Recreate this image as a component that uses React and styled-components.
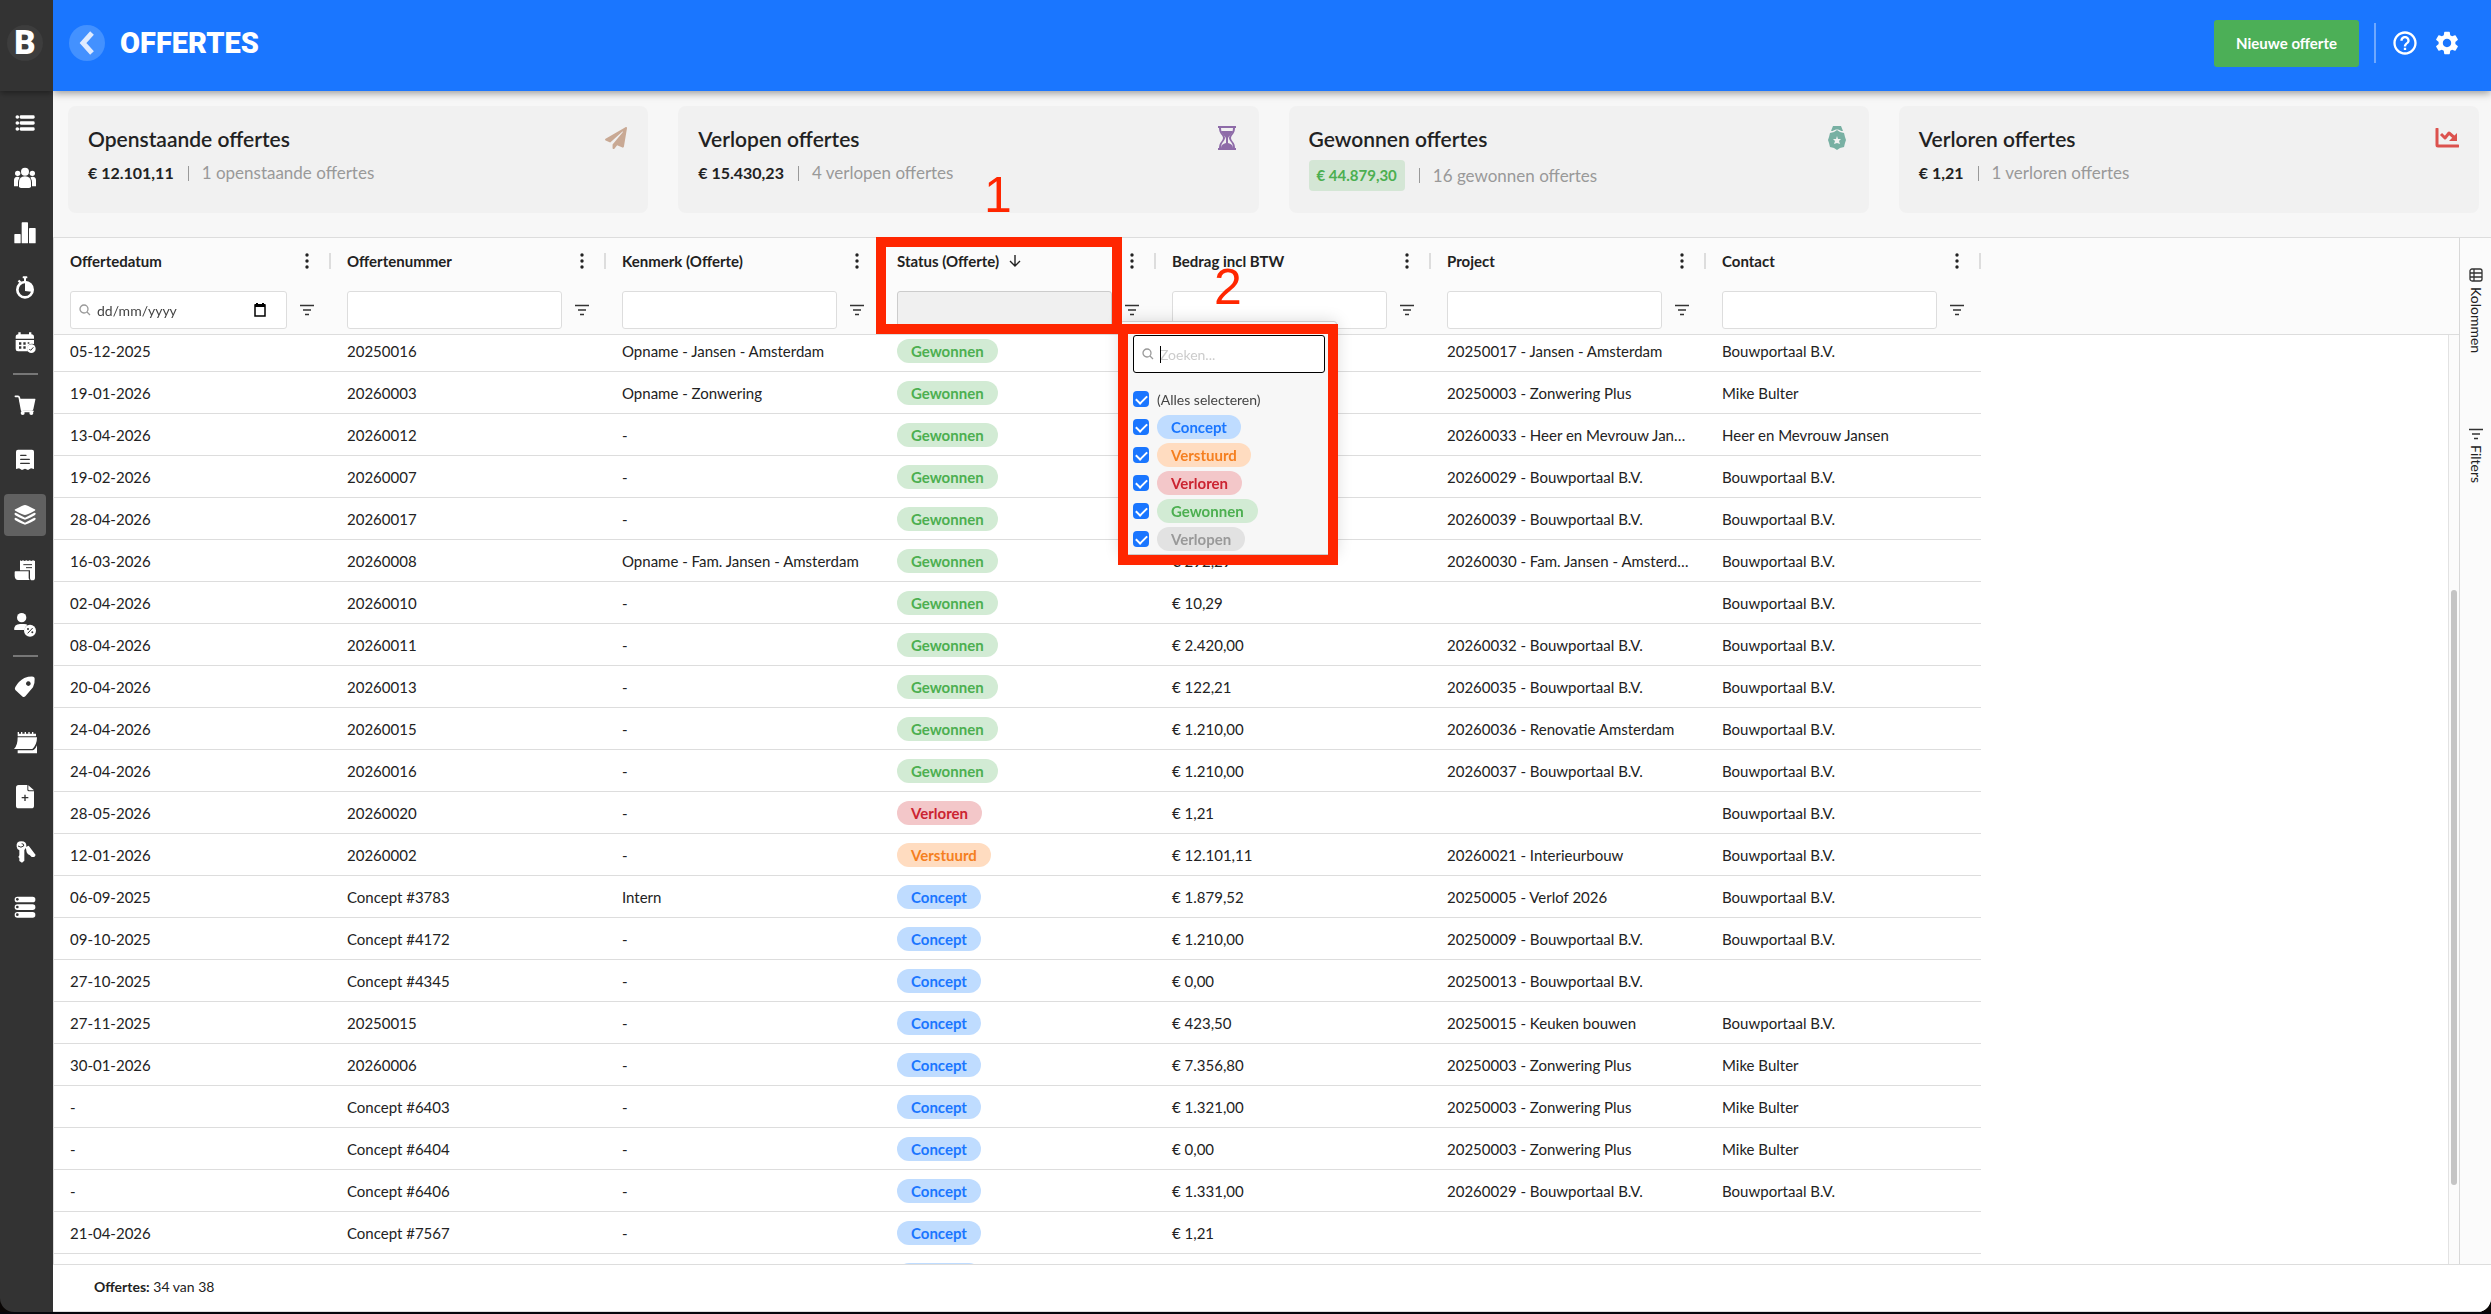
import React from "react";
import styled, { createGlobalStyle, css } from "styled-components";
import { MdHelpOutline, MdSettings } from "react-icons/md";
import { FaPaperPlane } from "react-icons/fa";

const GlobalStyle = createGlobalStyle`
  * {
    box-sizing: border-box;
  }

  body {
    margin: 0;
    background: #0a0706;
    color: #222;
    font-family: Lato, "Open Sans", sans-serif;
    font-size: 14px;
  }

  button,
  input {
    font: inherit;
    color: inherit;
  }
`;

const statusColors = {
  Concept: { text: "#1a76ff", background: "#bfdcff" },
  Verstuurd: { text: "#f57f20", background: "#ffdcc0" },
  Verloren: { text: "#cb2431", background: "#f3c7c9" },
  Gewonnen: { text: "#4caf50", background: "#d2ebd4" },
  Verlopen: { text: "#999999", background: "#e2e2e2" },
};

const columns = [
  "Offertedatum",
  "Offertenummer",
  "Kenmerk (Offerte)",
  "Status (Offerte)",
  "Bedrag incl BTW",
  "Project",
  "Contact",
];

const rows = [
  ["05-12-2025", "20250016", "Opname - Jansen - Amsterdam", "Gewonnen", "", "20250017 - Jansen - Amsterdam", "Bouwportaal B.V."],
  ["19-01-2026", "20260003", "Opname - Zonwering", "Gewonnen", "", "20250003 - Zonwering Plus", "Mike Bulter"],
  ["13-04-2026", "20260012", "-", "Gewonnen", "", "20260033 - Heer en Mevrouw Jansen", "Heer en Mevrouw Jansen"],
  ["19-02-2026", "20260007", "-", "Gewonnen", "", "20260029 - Bouwportaal B.V.", "Bouwportaal B.V."],
  ["28-04-2026", "20260017", "-", "Gewonnen", "", "20260039 - Bouwportaal B.V.", "Bouwportaal B.V."],
  ["16-03-2026", "20260008", "Opname - Fam. Jansen - Amsterdam", "Gewonnen", "€ 292,29", "20260030 - Fam. Jansen - Amsterdam", "Bouwportaal B.V."],
  ["02-04-2026", "20260010", "-", "Gewonnen", "€ 10,29", "", "Bouwportaal B.V."],
  ["08-04-2026", "20260011", "-", "Gewonnen", "€ 2.420,00", "20260032 - Bouwportaal B.V.", "Bouwportaal B.V."],
  ["20-04-2026", "20260013", "-", "Gewonnen", "€ 122,21", "20260035 - Bouwportaal B.V.", "Bouwportaal B.V."],
  ["24-04-2026", "20260015", "-", "Gewonnen", "€ 1.210,00", "20260036 - Renovatie Amsterdam", "Bouwportaal B.V."],
  ["24-04-2026", "20260016", "-", "Gewonnen", "€ 1.210,00", "20260037 - Bouwportaal B.V.", "Bouwportaal B.V."],
  ["28-05-2026", "20260020", "-", "Verloren", "€ 1,21", "", "Bouwportaal B.V."],
  ["12-01-2026", "20260002", "-", "Verstuurd", "€ 12.101,11", "20260021 - Interieurbouw", "Bouwportaal B.V."],
  ["06-09-2025", "Concept #3783", "Intern", "Concept", "€ 1.879,52", "20250005 - Verlof 2026", "Bouwportaal B.V."],
  ["09-10-2025", "Concept #4172", "-", "Concept", "€ 1.210,00", "20250009 - Bouwportaal B.V.", "Bouwportaal B.V."],
  ["27-10-2025", "Concept #4345", "-", "Concept", "€ 0,00", "20250013 - Bouwportaal B.V.", ""],
  ["27-11-2025", "20250015", "-", "Concept", "€ 423,50", "20250015 - Keuken bouwen", "Bouwportaal B.V."],
  ["30-01-2026", "20260006", "-", "Concept", "€ 7.356,80", "20250003 - Zonwering Plus", "Mike Bulter"],
  ["-", "Concept #6403", "-", "Concept", "€ 1.321,00", "20250003 - Zonwering Plus", "Mike Bulter"],
  ["-", "Concept #6404", "-", "Concept", "€ 0,00", "20250003 - Zonwering Plus", "Mike Bulter"],
  ["-", "Concept #6406", "-", "Concept", "€ 1.331,00", "20260029 - Bouwportaal B.V.", "Bouwportaal B.V."],
  ["21-04-2026", "Concept #7567", "-", "Concept", "€ 1,21", "", ""],
  ["", "", "", "Concept", "", "", ""],
];

/* Icons */

const NavIcon = ({ children }) => (
  <svg width="22" height="22" viewBox="0 0 66 66" fill="#fff" aria-hidden="true">
    {children}
  </svg>
);

const ListIcon = () => (
  <NavIcon>
    {[10, 28, 46].map((y) => (
      <g key={y}>
        <circle cx="10" cy={y + 5} r="5.5" />
        <rect x="17" y={y} width="45" height="10" rx="4" />
      </g>
    ))}
  </NavIcon>
);

const PeopleIcon = () => (
  <NavIcon>
    <circle cx="11" cy="19" r="8" />
    <circle cx="55" cy="19" r="8" />
    <circle cx="33" cy="14" r="12" />
    <path d="M0 58V40Q0 29 10 29Q15 29 17 32Q12 38 12 46V58Z" />
    <path d="M66 58V40Q66 29 56 29Q51 29 49 32Q54 38 54 46V58Z" />
    <path d="M15 58V46Q15 28 33 28Q51 28 51 46V58Q51 63 45 63H21Q15 63 15 58Z" />
  </NavIcon>
);

const BarsIcon = () => (
  <NavIcon>
    <rect x="1" y="36" width="19" height="28" rx="2" />
    <rect x="23" y="1" width="19" height="63" rx="2" />
    <rect x="45" y="18" width="20" height="46" rx="2" />
  </NavIcon>
);

const StopwatchIcon = () => (
  <NavIcon>
    <rect x="26" y="-2" width="14" height="6" rx="2" />
    <rect x="30" y="2" width="6" height="10" />
    <path d="M11 13l5-5 6 6-5 5z" />
    <circle cx="33" cy="38" r="23" fill="none" stroke="#fff" strokeWidth="8" />
    <path d="M33 14A24 24 0 0 1 57 38L52 44L33 42Z" />
  </NavIcon>
);

const CalendarIcon = () => (
  <NavIcon>
    <path d="M13 1h7v6h25V1h7v6q8 0 8 8v5H5v-5q0-8 8-8z" />
    <path d="M5 24h55v12q-18-4-20 14q0 4 2 8H12q-7 0-7-7z" />
    <path d="M15 31h7v7h-7zM28 31h7v7h-7zM41 31h5v4h-5zM15 43h7v7h-7zM28 43h7v7h-7z" fill="#333" />
    <circle cx="52" cy="50" r="13" />
    <path d="M46 51l4 4 8-9" fill="none" stroke="#333" strokeWidth="3" />
  </NavIcon>
);

const CartIcon = () => (
  <NavIcon>
    <path d="M4 7h8q3 0 4 4l7 37q1 4 5 4h29" fill="none" stroke="#fff" strokeWidth="5" strokeLinecap="round" />
    <path d="M15 14h48q2 0 1 3l-6 29q-1 4-5 4H24z" />
    <circle cx="26" cy="57" r="6" />
    <circle cx="52" cy="57" r="6" />
  </NavIcon>
);

const ReceiptIcon = () => (
  <NavIcon>
    <path d="M6 8q0-6 6-6h42q6 0 6 6v52l-9-2-9 5-9-4-9 4-9-5-9 2z" />
    <path d="M20 19h16M20 31h26M20 43h26" stroke="#333" strokeWidth="4" strokeLinecap="round" />
  </NavIcon>
);

const LayersIcon = () => (
  <NavIcon>
    <path d="M33 3Q38 3 62 16Q66 18 62 20Q38 33 33 33Q28 33 4 20Q0 18 4 16Q28 3 33 3Z" />
    <path d="M2 28Q4 25 8 28L33 41L58 28Q62 25 65 28Q66 31 62 34Q38 47 33 47Q28 47 4 34Q0 31 2 28Z" />
    <path d="M2 43Q4 40 8 43L33 56L58 43Q62 40 65 43Q66 46 62 49Q38 62 33 62Q28 62 4 49Q0 46 2 43Z" />
  </NavIcon>
);

const InvoiceIcon = () => (
  <NavIcon>
    <path d="M18 4l4 2 5-2 5 2 5-2 5 2 5-2 5 2 5-2 6 2v50q0 8-8 8-7 0-7-8V34H18z" />
    <path d="M28 17h26M36 26h18" stroke="#333" strokeWidth="3" />
    <path d="M4 37h40v19q0 4 3 7H12q-9 0-10-12V40q0-3 2-3z" />
  </NavIcon>
);

const UserDiscountIcon = () => (
  <NavIcon>
    <circle cx="23" cy="11" r="14" />
    <path d="M0 48q0-18 18-18h12q8 0 10 3-9 6-9 15H4q-4 0-4-3z" />
    <circle cx="48" cy="50" r="18" />
    <path d="M41 58L56 42" stroke="#333" strokeWidth="3" />
    <circle cx="42" cy="45" r="3" fill="#333" />
    <circle cx="55" cy="55" r="3" fill="#333" />
  </NavIcon>
);

const TagIcon = () => (
  <NavIcon>
    <path
      fillRule="evenodd"
      d="M31 6Q45 1 58 2Q62 3 62 8Q63 20 57 34L34 61Q30 65 26 62L4 42Q1 38 4 33Q14 15 31 6ZM43 16a7 7 0 1 0 .1 0z"
    />
  </NavIcon>
);

const NotepadIcon = () => (
  <NavIcon>
    <path d="M11 3h4v5h6V3h4v5h7V3h4v5h7V3h4v5h7V3h4v5h8v8H11z" />
    <path d="M11 19h58q0 22-14 35H0q11-10 11-35z" />
    <path d="M60 56q6-5 9-13v24H11V58h45z" />
  </NavIcon>
);

const FilePlusIcon = () => (
  <NavIcon>
    <path d="M6 5q0-8 8-8h26v14q0 5 5 5h15v43q0 8-8 8H14q-8 0-8-8z" />
    <path d="M43-2l17 15H46q-3 0-3-3z" />
    <path d="M33 26v19M23 35h20" stroke="#333" strokeWidth="4" />
  </NavIcon>
);

const KeysIcon = () => (
  <NavIcon>
    <path d="M35 18L44 14L65 42L61 48L53 48L47 42L42 40L38 34Z" />
    <path
      d="M8 17Q6 1 22 1Q38 1 37 15Q37 22 31 27V59L24 65L16 60V52L13 48L16 43V28Q9 25 8 17Z"
    />
    <path d="M12 15Q21 22 29 15Q31 8 23 8" fill="none" stroke="#333" strokeWidth="3" />
  </NavIcon>
);

const ServerIcon = () => (
  <NavIcon>
    {[2, 25, 48].map((y) => (
      <g key={y}>
        <rect x="2" y={y} width="62" height="17" rx="8" />
        <circle cx="10" cy={y + 8} r="4" fill="#333" />
      </g>
    ))}
  </NavIcon>
);

const HourglassIcon = () => (
  <svg width="18" height="24" viewBox="0 0 18 24" fill="#8e6ba8" aria-hidden="true">
    <path d="M0 0h18v2H0zM0 22h18v2H0z" />
    <path d="M1 2h2c0 6 4 7 4 10s-4 4-4 10H1c0-6 4-7 4-10S1 8 1 2zM17 2h-2c0 6-4 7-4 10s4 4 4 10h2c0-6-4-7-4-10s4-4 4-10z" />
    <path d="M3 5h12c-1 4-5 5-5 8v4c3 1 5 2 5 5H3c0-3 2-4 5-5v-4C8 10 4 9 3 5z" />
  </svg>
);

const MedalIcon = () => (
  <svg width="18" height="24" viewBox="0 0 18 24" fill="#78b0a3" aria-hidden="true">
    <path d="M5 0h8l2 5H13c-2-2-6-2-8 0H3z" />
    <path d="M9 4l3 2 4 1 1 4 1 3-1 3-1 4-4 1-3 2-3-2-4-1-1-4-1-3 1-3 1-4 4-1z" />
    <path d="M9 10l1 3h3l-2 2 1 3-3-1-3 1 1-3-2-2h3z" fill="#f1f1f1" />
  </svg>
);

const DeclineIcon = () => (
  <svg width="24" height="20" viewBox="0 0 24 20" fill="none" stroke="#dc524e" aria-hidden="true">
    <path d="M2 1v16q0 1 1 1h20" strokeWidth="3" strokeLinecap="round" />
    <path d="M6 6l4 4 4-5 7 6" strokeWidth="3" strokeLinejoin="round" />
    <path d="M22 5v8h-8z" fill="#dc524e" stroke="none" />
  </svg>
);

const KebabIcon = () => (
  <svg width="4" height="16" viewBox="0 0 4 16" fill="#222" aria-hidden="true">
    <circle cx="2" cy="2" r="1.7" />
    <circle cx="2" cy="8" r="1.7" />
    <circle cx="2" cy="14" r="1.7" />
  </svg>
);

const FilterIcon = () => (
  <svg width="14" height="12" viewBox="0 0 14 12" stroke="#333" strokeWidth="1.5" aria-hidden="true">
    <path d="M0 1.5h14M3 6h8M5 10.5h4" />
  </svg>
);

const SearchIcon = () => (
  <svg width="12" height="12" viewBox="0 0 12 12" fill="none" stroke="#999" strokeWidth="1.3" aria-hidden="true">
    <circle cx="5" cy="5" r="4" />
    <path d="M8 8l3 3" />
  </svg>
);

const DateIcon = () => (
  <svg width="12" height="14" viewBox="0 0 12 14" aria-hidden="true">
    <path d="M1 2h10v11H1z" fill="none" stroke="#000" strokeWidth="1.5" />
    <path d="M1 1h10v3H1zM2 0h2v2H2zM8 0h2v2H8z" />
  </svg>
);

const GridIcon = () => (
  <svg width="14" height="14" viewBox="0 0 14 14" fill="none" stroke="#333" strokeWidth="1.3" aria-hidden="true">
    <rect x="1" y="1" width="12" height="12" rx="2" />
    <path d="M1 5h12M5 1v12M1 9h12" />
  </svg>
);

const ArrowDownIcon = () => (
  <svg width="12" height="12" viewBox="0 0 12 12" fill="none" stroke="#222" strokeWidth="1.4" aria-hidden="true">
    <path d="M6 0v11M1 6l5 5 5-5" />
  </svg>
);

/* Shell */

const Screen = styled.div`
  position: relative;
  display: flex;
  height: 100vh;
  border-bottom: 2px solid #05060c;
  overflow: hidden;
`;

const Sidebar = styled.nav`
  flex: none;
  width: 53px;
  background: #333;
  border-bottom-left-radius: 14px;
`;

const Logo = styled.div`
  height: 91px;
  padding: 25px 0 0 7px;
  box-shadow: 0 2px 6px rgba(0, 0, 0, 0.4);
`;

const LogoMark = styled.div`
  width: 36px;
  height: 36px;
  border-radius: 50%;
  background: #3d3d3d;
  color: #fff;
  font-family: Roboto, sans-serif;
  font-size: 33px;
  font-weight: 900;
  line-height: 36px;
  text-align: center;
`;

const NavList = styled.div`
  display: flex;
  flex-direction: column;
  padding: 5px 0 0 4px;
`;

const NavLink = styled.a`
  display: flex;
  align-items: center;
  justify-content: center;
  width: 42px;
  height: 42px;
  margin: 6px 0 7px;
  border-radius: 4px;
  background: ${(props) => (props.$active ? "#616161" : "transparent")};

  svg {
    overflow: visible;
  }
`;

const NavDivider = styled.div`
  width: 25px;
  height: 2px;
  margin: 2px 0 3px 9px;
  background: #777;
`;

const Main = styled.main`
  flex: 1;
  display: flex;
  flex-direction: column;
  min-width: 0;
  background: #f7f7f7;
  border-bottom-right-radius: 14px;
  overflow: hidden;
`;

const TopBar = styled.header`
  flex: none;
  display: flex;
  align-items: center;
  height: 91px;
  padding: 0 30px 5px 16px;
  background: #1a76ff;
  box-shadow: 0 2px 8px rgba(0, 0, 0, 0.4);
`;

const BackButton = styled.button`
  display: flex;
  align-items: center;
  justify-content: center;
  width: 36px;
  height: 36px;
  padding: 0;
  border: 0;
  border-radius: 50%;
  background: #4391ff;
`;

const PageTitle = styled.h1`
  flex: 1;
  margin: 0 0 0 15px;
  color: #fff;
  font-family: Roboto, sans-serif;
  font-size: 29px;
  font-weight: 900;
`;

const PrimaryButton = styled.button`
  height: 47px;
  padding: 0 22px;
  border: 0;
  border-radius: 3px;
  background: #4caf57;
  color: #fff;
  font-size: 15px;
  font-weight: 700;
`;

const BarDivider = styled.div`
  width: 2px;
  height: 40px;
  margin: 0 15px;
  background: #6ea8ff;
`;

const IconButton = styled.button`
  display: flex;
  padding: 0;
  border: 0;
  background: none;
  color: #fff;

  & + & {
    margin-left: 14px;
  }
`;

/* Summary cards */

const Cards = styled.section`
  flex: none;
  display: grid;
  grid-template-columns: repeat(4, 1fr);
  gap: 30px;
  padding: 15px 12px 24px 15px;
`;

const Card = styled.article`
  display: flex;
  justify-content: space-between;
  height: 107px;
  padding: 20px 20px 0;
  border-radius: 8px;
  background: #f1f1f1;
`;

const CardTitle = styled.h2`
  margin: 0 0 8px;
  font-size: 21px;
  font-weight: 600;
  line-height: 26px;
`;

const CardFigures = styled.div`
  display: flex;
  align-items: center;
  font-size: 16px;
  line-height: 26px;
`;

const Amount = styled.strong`
  font-weight: 700;

  ${(props) =>
    props.$highlight &&
    css`
      padding: 2px 8px 3px;
      border-radius: 4px;
      background: #d4e6d5;
      color: #4caf50;
      font-size: 15px;
    `}
`;

const CardNote = styled.span`
  margin-left: 14px;
  padding-left: 14px;
  color: #999;
  background: linear-gradient(#999, #999) left center / 1px 15px no-repeat;
  font-size: 17px;
`;

const CardIcon = styled.div`
  display: flex;
  align-items: center;
  justify-content: center;
  width: 24px;
  height: 24px;
`;

/* Grid */

const GridArea = styled.section`
  flex: 1;
  display: flex;
  min-height: 0;
  border-top: 1px solid #ddd;
  background: #fbfbfb;
`;

const GridView = styled.div`
  flex: 1;
  display: flex;
  flex-direction: column;
  min-width: 0;
  border-left: 1px solid #ddd;
`;

const Viewport = styled.div`
  flex: 1;
  overflow: hidden;
  min-width: 0;
  background: #fff;
`;

const Table = styled.table`
  width: 100%;
  table-layout: fixed;
  border-spacing: 0;

  thead {
    position: sticky;
    top: 0;
    z-index: 1;
    background: #fbfbfb;
  }
`;

const Col = styled.col`
  width: ${(props) => props.$width};
`;

const HeadCell = styled.th`
  height: 48px;
  padding: 0 0 2px;
  text-align: left;
`;

const HeadInner = styled.div`
  display: flex;
  align-items: center;
  height: 16px;
  padding: 0 20px 0 16px;
  border-right: 2px solid #ddd;
  font-size: 15px;
  font-weight: 700;
`;

const HeadLabel = styled.span`
  flex: 1;
  display: flex;
  align-items: center;
  gap: 10px;
`;

const MenuButton = styled.button`
  display: flex;
  padding: 0;
  border: 0;
  background: none;
`;

const FilterCell = styled.td`
  height: 49px;
  padding: 0;
  border-bottom: 1px solid #ddd;
`;

const FilterInner = styled.div`
  display: flex;
  align-items: center;
  gap: 13px;
  padding: 0 17px 0 16px;
`;

const FilterField = styled.div`
  flex: 1;
  display: flex;
  align-items: center;
  height: 38px;
  min-width: 0;
  padding: 0 20px 0 8px;
  border: 1px solid ${(props) => (props.$disabled ? "#ccc" : "#ddd")};
  border-radius: 3px;
  background: ${(props) => (props.$disabled ? "#f0f0f0" : "#fff")};
`;

const TextInput = styled.input`
  flex: 1;
  width: 100%;
  min-width: 0;
  margin-left: 6px;
  padding: 0;
  border: 0;
  outline: 0;
  background: none;

  &::placeholder {
    color: ${(props) => (props.$faint ? "#ccc" : "#444")};
    opacity: 1;
  }
`;

const Cell = styled.td`
  height: 42px;
  padding: 0 16px;
  border-bottom: 1px solid #ddd;
  background: #fff;
  font-size: 15px;
  white-space: nowrap;
  overflow: hidden;
  text-overflow: ellipsis;
`;

const StatusTag = styled.span`
  display: inline-block;
  height: 24px;
  padding: 0 14px;
  border-radius: 12px;
  background: ${(props) => statusColors[props.$status].background};
  color: ${(props) => statusColors[props.$status].text};
  font-size: 15px;
  font-weight: 700;
  line-height: 24px;
  vertical-align: middle;
`;

const ScrollColumn = styled.div`
  flex: none;
  display: flex;
  flex-direction: column;
  width: 11px;
`;

const ScrollTrack = styled.div`
  flex: 1;
  display: flex;
  flex-direction: column;
  justify-content: flex-end;
  align-items: center;
  margin-top: 97px;
  padding-bottom: 79px;
  border-left: 1px solid #e2e2e2;
  box-shadow: 0 -1px 0 #ddd;
`;

const ScrollThumb = styled.div`
  width: 6px;
  height: 70%;
  border-radius: 3px;
  background: #c4c4c4;
`;

const SideBar = styled.aside`
  flex: none;
  display: flex;
  flex-direction: column;
  gap: 75px;
  width: 32px;
  padding-top: 30px;
  border-left: 1px solid #d8d8d8;
`;

const SideButton = styled.button`
  display: flex;
  align-items: center;
  gap: 5px;
  width: 32px;
  padding: 0;
  border: 0;
  background: none;
  writing-mode: vertical-rl;
`;

const Footer = styled.footer`
  flex: none;
  height: 48px;
  padding-left: 41px;
  border-top: 1px solid #ddd;
  border-bottom: 1px solid #ddd;
  background: #fff;
  line-height: 44px;
`;

/* Status filter menu */

const FilterMenu = styled.div`
  position: absolute;
  top: 321px;
  left: 1120px;
  z-index: 2;
  width: 217px;
  height: 234px;
  padding: 13px 11px 0 12px;
  border: 1px solid #ccc;
  border-radius: 3px;
  background: #f7f7f7;
  box-shadow: 0 0 16px rgba(0, 0, 0, 0.15);
`;

const MenuSearch = styled.div`
  position: relative;
  display: flex;
  align-items: center;
  height: 38px;
  margin-bottom: 12px;
  padding: 0 8px;
  border: 1px solid #000;
  border-radius: 3px;
  background: #fff;
`;

const Caret = styled.span`
  position: absolute;
  left: 26px;
  width: 1px;
  height: 17px;
  background: #000;
`;

const Option = styled.label`
  display: flex;
  align-items: center;
  gap: 8px;
  height: 28px;
  color: #444;
`;

const Checkbox = styled.input`
  flex: none;
  width: 16px;
  height: 16px;
  margin: 0;
  border-radius: 4px;
  appearance: none;
  background: #1a76ff;

  &:checked::after {
    content: "";
    display: block;
    width: 9px;
    height: 5px;
    margin: 4px 0 0 3px;
    border: solid #fff;
    border-width: 0 0 2px 2px;
    transform: rotate(-45deg);
  }
`;

/* Annotations */

const Marker = styled.div`
  position: absolute;
  top: ${(props) => props.$top}px;
  left: ${(props) => props.$left}px;
  z-index: 3;
  width: ${(props) => props.$width}px;
  height: ${(props) => props.$height}px;
  border: 10px solid #ff2600;
  pointer-events: none;
`;

const MarkerNumber = styled.div`
  position: absolute;
  top: ${(props) => props.$top}px;
  left: ${(props) => props.$left}px;
  z-index: 3;
  color: #ff2600;
  font-family: "Liberation Sans", Arial, sans-serif;
  font-size: 50px;
  line-height: 50px;
`;

const navGroups = [
  [
    ["Overzicht", ListIcon],
    ["Relaties", PeopleIcon],
    ["Rapportage", BarsIcon],
    ["Uren", StopwatchIcon],
    ["Planning", CalendarIcon],
  ],
  [
    ["Inkoop", CartIcon],
    ["Bonnen", ReceiptIcon],
    ["Offertes", LayersIcon],
    ["Facturen", InvoiceIcon],
    ["Kortingen", UserDiscountIcon],
  ],
  [
    ["Artikelen", TagIcon],
    ["Notities", NotepadIcon],
    ["Documenten", FilePlusIcon],
    ["Sleutels", KeysIcon],
    ["Opslag", ServerIcon],
  ],
];

const cards = [
  {
    title: "Openstaande offertes",
    amount: "€ 12.101,11",
    note: "1 openstaande offertes",
    icon: <FaPaperPlane size={22} color="#c9a994" />,
  },
  {
    title: "Verlopen offertes",
    amount: "€ 15.430,23",
    note: "4 verlopen offertes",
    icon: <HourglassIcon />,
  },
  {
    title: "Gewonnen offertes",
    amount: "€ 44.879,30",
    note: "16 gewonnen offertes",
    highlight: true,
    icon: <MedalIcon />,
  },
  {
    title: "Verloren offertes",
    amount: "€ 1,21",
    note: "1 verloren offertes",
    icon: <DeclineIcon />,
  },
];

const Navigation = () => (
  <Sidebar>
    <Logo>
      <LogoMark>B</LogoMark>
    </Logo>
    <NavList>
      {navGroups.map((group, index) => (
        <React.Fragment key={index}>
          {index > 0 && <NavDivider />}
          {group.map(([label, Icon]) => (
            <NavLink key={label} href="#" aria-label={label} $active={label === "Offertes"}>
              <Icon />
            </NavLink>
          ))}
        </React.Fragment>
      ))}
    </NavList>
  </Sidebar>
);

const OffersTable = () => {
  const viewport = React.useRef(null);

  React.useLayoutEffect(() => {
    viewport.current.scrollTop = 5;
  }, []);

  return (
    <Viewport ref={viewport}>
      <Table>
        <colgroup>
          {columns.map((column, index) => (
            <Col key={column} $width={index === 0 ? "277px" : "275px"} />
          ))}
          <Col $width="auto" />
        </colgroup>
        <thead>
          <tr>
            {columns.map((column) => (
              <HeadCell key={column} scope="col">
                <HeadInner>
                  <HeadLabel>
                    {column}
                    {column === "Status (Offerte)" && <ArrowDownIcon />}
                  </HeadLabel>
                  <MenuButton aria-label={`Menu ${column}`}>
                    <KebabIcon />
                  </MenuButton>
                </HeadInner>
              </HeadCell>
            ))}
            <td />
          </tr>
          <tr>
            {columns.map((column, index) => (
              <FilterCell key={column}>
                <FilterInner>
                  <FilterField $disabled={column === "Status (Offerte)"}>
                    {index === 0 && <SearchIcon />}
                    <TextInput
                      aria-label={`Filter ${column}`}
                      placeholder={index === 0 ? "dd/mm/yyyy" : undefined}
                      disabled={column === "Status (Offerte)"}
                    />
                    {index === 0 && <DateIcon />}
                  </FilterField>
                  <MenuButton aria-label={`Open filter ${column}`}>
                    <FilterIcon />
                  </MenuButton>
                </FilterInner>
              </FilterCell>
            ))}
            <FilterCell />
          </tr>
        </thead>
        <tbody>
          {rows.map((row, rowIndex) => (
            <tr key={rowIndex}>
              {row.map((value, index) => (
                <Cell key={index}>
                  {index === 3 ? <StatusTag $status={value}>{value}</StatusTag> : value}
                </Cell>
              ))}
            </tr>
          ))}
        </tbody>
      </Table>
    </Viewport>
  );
};

const StatusFilter = () => (
  <FilterMenu>
    <MenuSearch>
      <SearchIcon />
      <TextInput $faint aria-label="Zoeken" placeholder="Zoeken..." />
      <Caret />
    </MenuSearch>
    <Option>
      <Checkbox type="checkbox" defaultChecked />
      (Alles selecteren)
    </Option>
    {Object.keys(statusColors).map((status) => (
      <Option key={status}>
        <Checkbox type="checkbox" defaultChecked />
        <StatusTag $status={status}>{status}</StatusTag>
      </Option>
    ))}
  </FilterMenu>
);

const App = () => (
  <>
    <GlobalStyle />
    <Screen>
      <Navigation />
      <Main>
        <TopBar>
          <BackButton aria-label="Terug">
            <svg width="16" height="24" viewBox="0 0 16 24" fill="none" stroke="#dfebff" strokeWidth="5">
              <path d="M13 2L4 12l9 10" />
            </svg>
          </BackButton>
          <PageTitle>OFFERTES</PageTitle>
          <PrimaryButton>Nieuwe offerte</PrimaryButton>
          <BarDivider />
          <IconButton aria-label="Help">
            <MdHelpOutline size={28} />
          </IconButton>
          <IconButton aria-label="Instellingen">
            <MdSettings size={28} />
          </IconButton>
        </TopBar>
        <Cards>
          {cards.map((card) => (
            <Card key={card.title}>
              <div>
                <CardTitle>{card.title}</CardTitle>
                <CardFigures>
                  <Amount $highlight={card.highlight}>{card.amount}</Amount>
                  <CardNote>{card.note}</CardNote>
                </CardFigures>
              </div>
              <CardIcon>{card.icon}</CardIcon>
            </Card>
          ))}
        </Cards>
        <GridArea>
          <GridView>
            <OffersTable />
          </GridView>
          <ScrollColumn>
            <ScrollTrack>
              <ScrollThumb />
            </ScrollTrack>
          </ScrollColumn>
          <SideBar>
            <SideButton>
              <GridIcon />
              Kolommen
            </SideButton>
            <SideButton>
              <FilterIcon />
              Filters
            </SideButton>
          </SideBar>
        </GridArea>
        <Footer>
          <strong>Offertes:</strong> 34 van 38
        </Footer>
      </Main>
      <StatusFilter />
      <Marker $top={237} $left={876} $width={246} $height={97} />
      <Marker $top={324} $left={1118} $width={220} $height={241} />
      <MarkerNumber $top={170} $left={984}>
        1
      </MarkerNumber>
      <MarkerNumber $top={262} $left={1214}>
        2
      </MarkerNumber>
    </Screen>
  </>
);

export default App;
